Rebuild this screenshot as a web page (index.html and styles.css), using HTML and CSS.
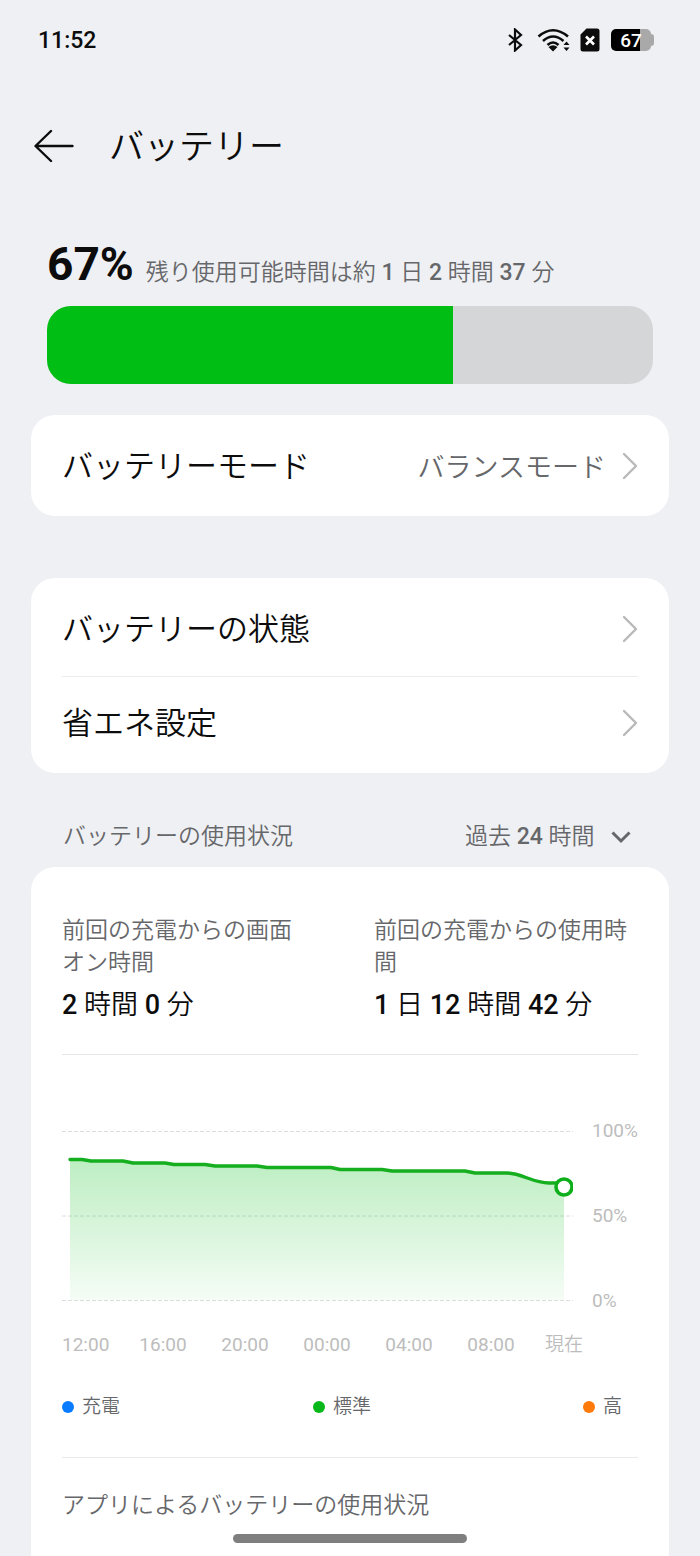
FILE: index.html
```html
<!DOCTYPE html>
<html lang="ja">
<head>
<meta charset="utf-8">
<meta name="viewport" content="width=device-width, initial-scale=1">
<title>バッテリー</title>
<link rel="stylesheet" href="styles.css">
</head>
<body>
<div class="status">
  <time class="clock">11:52</time>
  <div class="status-icons">
    <svg class="bluetooth" width="16" height="24" viewBox="0 0 16 24" fill="none" stroke="currentColor" stroke-width="2.200"><path d="M2 7l12 10-6 5.500v-21L14 7 2 17"/></svg>
    <svg class="wifi" width="34" height="24" viewBox="0 0 34 24" fill="none" stroke="currentColor" stroke-width="2.600"><path d="M1.500 8.500Q16 -4 31 8.500M6 13Q16 4 26.500 13M10.500 17Q16 12 21.500 17"/><path d="M11.500 19Q16 15.500 20.500 19L16 23.500zM26.500 17l3-3.500 3 3.500zM26.500 19.500l3 3.500 3-3.500z" fill="currentColor" stroke="none"/></svg>
    <svg class="sim" width="20" height="24" viewBox="0 0 20 24"><path d="M6.500 0.500H17a2.500 2.500 0 0 1 2.500 2.500v18A2.500 2.500 0 0 1 17 23.500H3a2.500 2.500 0 0 1-2.500-2.500V6.500z" fill="currentColor"/><path d="M6 8.500l8 8M14 8.500l-8 8" stroke="#fff" stroke-width="2.600"/></svg>
    <div class="cell"><span class="cell-body">67</span><span class="cell-tip"></span></div>
  </div>
</div>

<header class="header">
  <button class="back" type="button" aria-label="戻る">
    <svg width="40" height="34" viewBox="0 0 40 34" fill="none" stroke="currentColor" stroke-width="2.400" stroke-linecap="round" stroke-linejoin="round"><path d="M17 2L1.500 17 17 32M2 17h36.500"/></svg>
  </button>
  <h1 class="title">バッテリー</h1>
</header>

<main class="main">
  <section class="level">
    <label class="level-text" for="level"><strong class="percent">67%</strong><span class="remaining">残り使用可能時間は約 1 日 2 時間 37 分</span></label>
    <progress class="bar" id="level" max="100" value="67"></progress>
  </section>

  <nav class="card">
    <a class="row row-single" href="#mode"><span class="row-label">バッテリーモード</span><span class="row-value">バランスモード</span><svg class="chevron" width="16" height="28" viewBox="0 0 16 28"><path d="M2 2l12 12L2 26"/></svg></a>
  </nav>

  <nav class="card card-list">
    <a class="row" href="#health"><span class="row-label">バッテリーの状態</span><svg class="chevron" width="16" height="28" viewBox="0 0 16 28"><path d="M2 2l12 12L2 26"/></svg></a>
    <a class="row" href="#saving"><span class="row-label">省エネ設定</span><svg class="chevron" width="16" height="28" viewBox="0 0 16 28"><path d="M2 2l12 12L2 26"/></svg></a>
  </nav>

  <div class="section-head">
    <label for="period">バッテリーの使用状況</label>
    <span class="period">
      <select id="period"><option>過去 24 時間</option></select>
      <svg width="20" height="14" viewBox="0 0 20 14" fill="none" stroke="currentColor" stroke-width="3"><path d="M1.500 2.500L10 11l8.500-8.500"/></svg>
    </span>
  </div>

  <section class="card usage">
    <dl class="stats">
      <div class="stat"><dt>前回の充電からの画面オン時間</dt><dd>2 時間 0 分</dd></div>
      <div class="stat"><dt>前回の充電からの使用時間</dt><dd>1 日 12 時間 42 分</dd></div>
    </dl>
    <div class="chart">
      <svg class="plot" viewBox="0 0 511 190" role="img" aria-label="バッテリー残量の推移">
        <defs><linearGradient id="fade" x1="0" y1="0" x2="0" y2="1"><stop offset="0" stop-color="#00be14" stop-opacity=".26"/><stop offset="1" stop-color="#00be14" stop-opacity=".04"/></linearGradient></defs>
        <path d="M0 10.500h511M0 95h511M0 179.500h511" stroke="#dcdcdc" stroke-dasharray="4 2"/>
        <path d="M8 39h12l9 1.500h32l10 2h32l9 1.500h31l10 2h42l10 1.500h64l9 2h42l10 1.500h73l10 2h32c14 0 25 10 42 10L502 66V179H8z" fill="url(#fade)"/>
        <path d="M8 38.500h12l9 1.500h32l10 2h32l9 1.500h31l10 1.500h42l10 1.500h64l9 2h42l10 1.500h73l10 2h32c14 0 26 10 42 10h12" fill="none" stroke="#14ae1e" stroke-width="3.400" stroke-linecap="round" stroke-linejoin="round"/>
        <circle cx="502" cy="66" r="8" fill="#fff" stroke="#0fae1b" stroke-width="3.600"/>
      </svg>
      <div class="scale"><span>100%</span><span>50%</span><span>0%</span></div>
    </div>
    <div class="hours"><span>12:00</span><span>16:00</span><span>20:00</span><span>00:00</span><span>04:00</span><span>08:00</span><span>現在</span></div>
    <ul class="legend">
      <li><i class="dot charging"></i>充電</li>
      <li><i class="dot normal"></i>標準</li>
      <li><i class="dot high"></i>高</li>
    </ul>
    <h2 class="apps">アプリによるバッテリーの使用状況</h2>
  </section>
</main>
<div class="home"></div>
</body>
</html>
```
FILE: styles.css
```css
* { box-sizing: border-box; margin: 0; padding: 0; }

body {
  display: flex;
  flex-direction: column;
  min-height: 100vh;
  background: #eff0f3;
  color: #0c0c0d;
  font-family: Roboto, "Noto Sans CJK JP DemiLight", "Noto Sans CJK JP", sans-serif;
  font-weight: 400;
}

a { color: inherit; text-decoration: none; }
svg { display: block; }

.status {
  display: flex;
  align-items: center;
  justify-content: space-between;
  height: 80px;
  padding: 0 46px 0 38px;
}
.clock { font-size: 23px; font-weight: 500; }
.status-icons { display: flex; align-items: center; }
.wifi { margin-left: 14px; }
.sim { margin-left: 9px; }
.cell { display: flex; align-items: center; margin-left: 11px; }
.cell-body {
  width: 40px;
  height: 22px;
  border-radius: 5px;
  background: linear-gradient(to right, #000 72%, #a9a9a9 72%);
  color: #fff;
  font-size: 19px;
  font-weight: 500;
  line-height: 23px;
  text-align: center;
}
.cell-tip { width: 3px; height: 12px; border-radius: 0 3px 3px 0; background: #a9a9a9; }

.header {
  display: flex;
  align-items: center;
  gap: 35px;
  height: 132px;
  padding: 0 34px;
}
.back { border: 0; background: none; color: inherit; }
.title { padding-top: 4px; font-size: 35px; font-weight: 400; line-height: 52px; }

.main { display: flex; flex: 1; flex-direction: column; padding: 0 31px; }

.level { padding: 22px 16px 0; }
.level-text { display: flex; align-items: baseline; gap: 12px; height: 72px; }
.percent { font-size: 46px; font-weight: 700; line-height: 60px; }
.remaining { color: #66676a; font-size: 23px; font-weight: 500; }
.bar {
  display: block;
  width: 100%;
  height: 78px;
  overflow: hidden;
  appearance: none;
  border: 0;
  border-radius: 24px;
  background: #d5d6d8;
}
.bar::-webkit-progress-bar { background: #d5d6d8; }
.bar::-webkit-progress-value { background: #00be14; }

.card { margin-top: 31px; padding: 0 31px; border-radius: 24px; background: #fff; }
.card-list { margin-top: 62px; padding-top: 4px; padding-bottom: 4px; }
.row { display: flex; align-items: center; height: 94px; }
.row-single { height: 101px; }
.row + .row { height: 93px; border-top: 1px solid #ececed; }
.row-label { flex: 1; padding-top: 2px; font-size: 31px; line-height: 44px; }
.row-value { margin-right: 16px; color: #66676a; font-size: 27px; }
.chevron { fill: none; stroke: #b9b9b9; stroke-width: 2.4; stroke-linecap: round; stroke-linejoin: round; }

.section-head {
  display: flex;
  align-items: center;
  justify-content: space-between;
  margin-top: 31px;
  padding: 17px 38px 14px 32px;
  color: #66676a;
  font-size: 23px;
  line-height: 32px;
}
.period { display: flex; align-items: center; gap: 16px; }
.period select {
  appearance: none;
  border: 0;
  background: none;
  color: inherit;
  font: inherit;
  font-weight: 500;
}

.usage {
  flex: 1;
  margin-top: 0;
  padding-top: 48px;
  padding-bottom: 32px;
  border-radius: 24px 24px 0 0;
}
.stats {
  display: grid;
  grid-template-columns: 1fr 1fr;
  gap: 48px;
  padding-bottom: 31px;
  border-bottom: 1px solid #e6e6e7;
}
.stat:first-child { padding-right: 16px; }
.stat dt { margin-bottom: 8px; color: #66676a; font-size: 23px; line-height: 32px; }
.stat dd { font-size: 27px; font-weight: 500; line-height: 36px; }

.chart {
  display: grid;
  grid-template-columns: 1fr 46px;
  gap: 19px;
  margin-top: 66px;
  color: #bdbdbd;
}
.plot { width: 100%; }
.scale { display: flex; flex-direction: column; justify-content: space-between; font-size: 19px; line-height: 20px; }
.hours {
  display: grid;
  grid-template-columns: 60fr repeat(5, 82fr) 64fr;
  margin-top: 20px;
  padding-right: 42px;
  color: #bdbdbd;
  font-size: 19px;
  line-height: 28px;
  text-align: center;
}
.hours span:first-child { text-align: left; }

.legend {
  display: grid;
  grid-template-columns: 1fr auto 1fr;
  padding: 34px 16px 36px 0;
  border-bottom: 1px solid #e9e9ea;
  color: #66676a;
  font-size: 19px;
  line-height: 28px;
  list-style: none;
}
.legend li { display: flex; align-items: center; gap: 8px; }
.legend li:last-child { justify-self: end; }
.dot { width: 12px; height: 12px; border-radius: 50%; }
.charging { background: #087bff; }
.normal { background: #08b81a; }
.high { background: #ff7a08; }

.apps { margin-top: 32px; color: #66676a; font-size: 23px; font-weight: 400; line-height: 32px; }

.home {
  position: fixed;
  bottom: 13px;
  left: 50%;
  width: 234px;
  height: 9px;
  transform: translateX(-50%);
  border-radius: 5px;
  background: #7f7f80;
}
```
